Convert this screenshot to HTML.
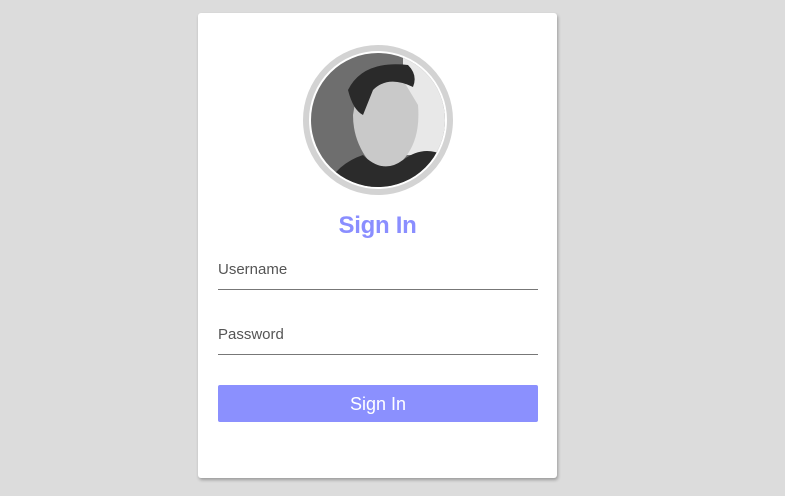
<!DOCTYPE html>
<html><head><style>
body{margin:0;width:785px;height:496px;background:#dcdcdc;font-family:"Liberation Sans",sans-serif;position:relative;overflow:hidden}
.card{position:absolute;left:198px;top:13px;width:359px;height:465px;background:#fff;border-radius:3px;box-shadow:1px 2px 3px rgba(0,0,0,.3)}
.av{position:absolute;left:105px;top:32px;width:150px;height:150px}
.t{position:absolute;left:0;width:359px;top:199px;text-align:center;color:#8a8eff;font-size:24px;font-weight:bold;letter-spacing:-0.3px}
.lbl{position:absolute;left:20px;font-size:15px;color:#555}
.ln{position:absolute;left:20px;width:320px;height:1px;background:#777}
.btn{position:absolute;left:20px;top:372px;width:320px;height:37px;background:#8b90fe;border-radius:2px;color:#fff;font-size:18px;text-align:center;line-height:39px}
</style></head><body>
<div class="card">
<svg class="av" viewBox="0 0 150 150">
<defs><clipPath id="c"><circle cx="75" cy="75" r="67"/></clipPath></defs>
<circle cx="75" cy="75" r="72" fill="#fff" stroke="#d3d3d3" stroke-width="6"/>
<g clip-path="url(#c)">
<rect width="150" height="150" fill="#6e6e6e"/>
<rect x="100" y="0" width="50" height="110" fill="#e8e8e8"/>
<path d="M55 40 Q75 28 100 35 L115 60 Q118 95 100 115 Q80 130 65 115 Q50 95 50 70Z" fill="#c9c9c9"/>
<path d="M45 45 Q60 15 105 20 Q115 30 110 42 Q85 30 70 45 L60 70 Q50 65 45 45Z" fill="#2a2a2a"/>
<path d="M20 150 Q30 120 60 110 Q80 130 100 115 Q120 100 140 110 L150 150Z" fill="#2b2b2b"/>
</g>
</svg>
<div class="t">Sign In</div>
<div class="lbl" style="top:248px">Username</div>
<div class="ln" style="top:276px"></div>
<div class="lbl" style="top:313px">Password</div>
<div class="ln" style="top:341px"></div>
<div class="btn">Sign In</div>
</div>
</body></html>
